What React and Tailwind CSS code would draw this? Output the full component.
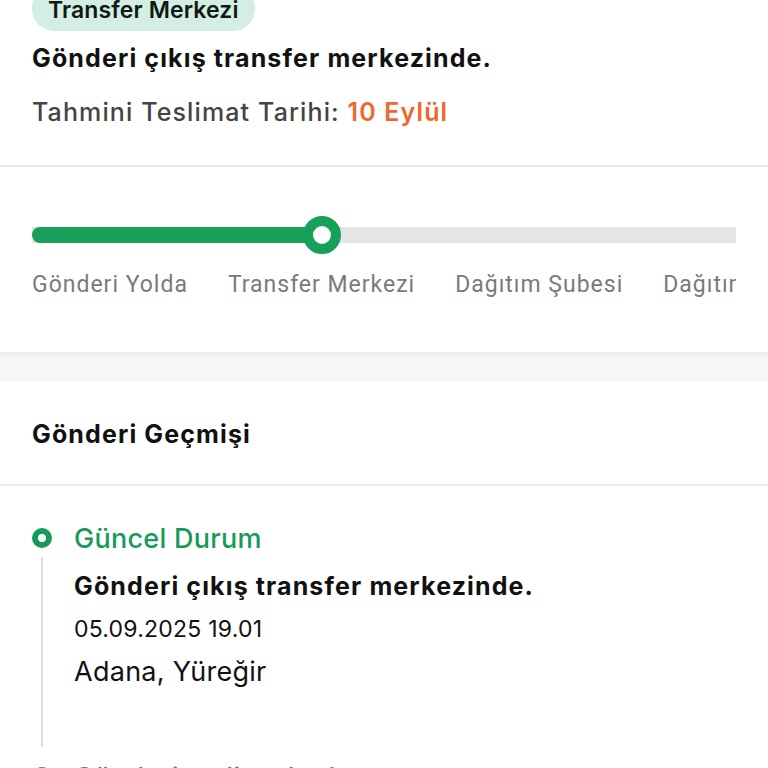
import React from 'react';

const STEPS = ['Gönderi Yolda', 'Transfer Merkezi', 'Dağıtım Şubesi', 'Dağıtımda'];

const HISTORY = [
  {
    status: 'Güncel Durum',
    title: 'Gönderi çıkış transfer merkezinde.',
    date: '05.09.2025 19.01',
    place: 'Adana, Yüreğir',
    active: true,
  },
  {
    status: 'Gönderi teslim alındı',
    title: 'Gönderi transfer merkezine ulaştı.',
    date: '04.09.2025 22.40',
    place: 'Adana, Yüreğir',
    active: false,
  },
];

const App = () => {
  return (
    <div className="w-[768px] h-[768px] bg-white overflow-hidden font-['Inter','Noto_Sans',sans-serif] text-[#111]">
      {/* summary */}
      <div className="px-8 pb-[37px] border-b-2 border-[#ececec]">
        <div className="-mt-[17px] inline-flex h-[46px] items-center rounded-[22px] bg-[#d3eee2] px-4 pt-1 text-[23px] font-semibold tracking-[0.005em] text-[#0f1a14]">
          Transfer Merkezi
        </div>
        <p className="mt-[11px] text-[25px] leading-[32px] font-bold tracking-[0.045em]">Gönderi çıkış transfer merkezinde.</p>
        <p className="mt-[22px] text-[25px] leading-[32px] font-medium tracking-[0.045em] text-[#444]">
          Tahmini Teslimat Tarihi: <span className="font-semibold text-[#f0672c]">10 Eylül</span>
        </p>
      </div>

      {/* progress */}
      <div className="relative z-10 bg-white pt-[49px] pb-[53px] shadow-[0_3px_6px_rgba(0,0,0,0.05)]">
        <div className="mx-8 overflow-hidden">
          <div className="w-[960px]">
            <div className="relative h-[38px] flex items-center">
              <div className="h-[16px] w-full bg-[#e4e5e7]">
                <div className="h-full w-[290px] rounded-l-full bg-[#16a05a]" />
              </div>
              <div className="absolute left-[271px] top-0 h-[38px] w-[38px] rounded-full border-[10px] border-[#16a05a] bg-white" />
            </div>
            <div className="mt-[17px] flex gap-[40px] font-['Roboto',sans-serif] text-[23px] leading-[28px] tracking-[0.043em] text-[#7a7a7a] whitespace-nowrap">
              {STEPS.map((s) => (
                <span key={s}>{s}</span>
              ))}
            </div>
          </div>
        </div>
      </div>

      <div className="h-[30px] bg-[#f6f6f6]" />

      {/* history header */}
      <div className="px-8 pt-[36px] pb-[34px] border-b-2 border-[#ececec]">
        <h2 className="text-[25px] leading-[32px] font-bold tracking-[0.045em]">Gönderi Geçmişi</h2>
      </div>

      {/* timeline */}
      <div className="px-8 pt-[36px]">
        {HISTORY.map((item, i) => (
          <div key={i} className="flex gap-[22px]">
            <div className="flex w-5 flex-col items-center">
              <div
                className={
                  item.active
                    ? 'mt-[6px] h-5 w-5 rounded-full border-[6px] border-[#179a59] bg-white'
                    : 'mt-[6px] h-5 w-5 rounded-full border-[6px] border-[#777] bg-white'
                }
              />
              <div className="mt-[9px] mb-[14px] w-[2px] flex-1 bg-[#dedede]" />
            </div>
            <div className="pb-[72px]">
              <p
                className={
                  item.active
                    ? 'text-[27px] leading-[34px] font-medium tracking-[0.01em] text-[#179a59]'
                    : 'text-[27px] leading-[34px] font-medium tracking-[0.01em] text-[#777]'
                }
              >
                {item.status}
              </p>
              <p className="mt-[14px] text-[25px] leading-[32px] font-bold tracking-[0.045em]">{item.title}</p>
              <p className="mt-[12px] text-[23px] leading-[30px] tracking-[0.01em]">{item.date}</p>
              <p className="mt-[11px] text-[27px] leading-[34px] tracking-[0.01em]">{item.place}</p>
            </div>
          </div>
        ))}
      </div>
    </div>
  );
};

export default App;
